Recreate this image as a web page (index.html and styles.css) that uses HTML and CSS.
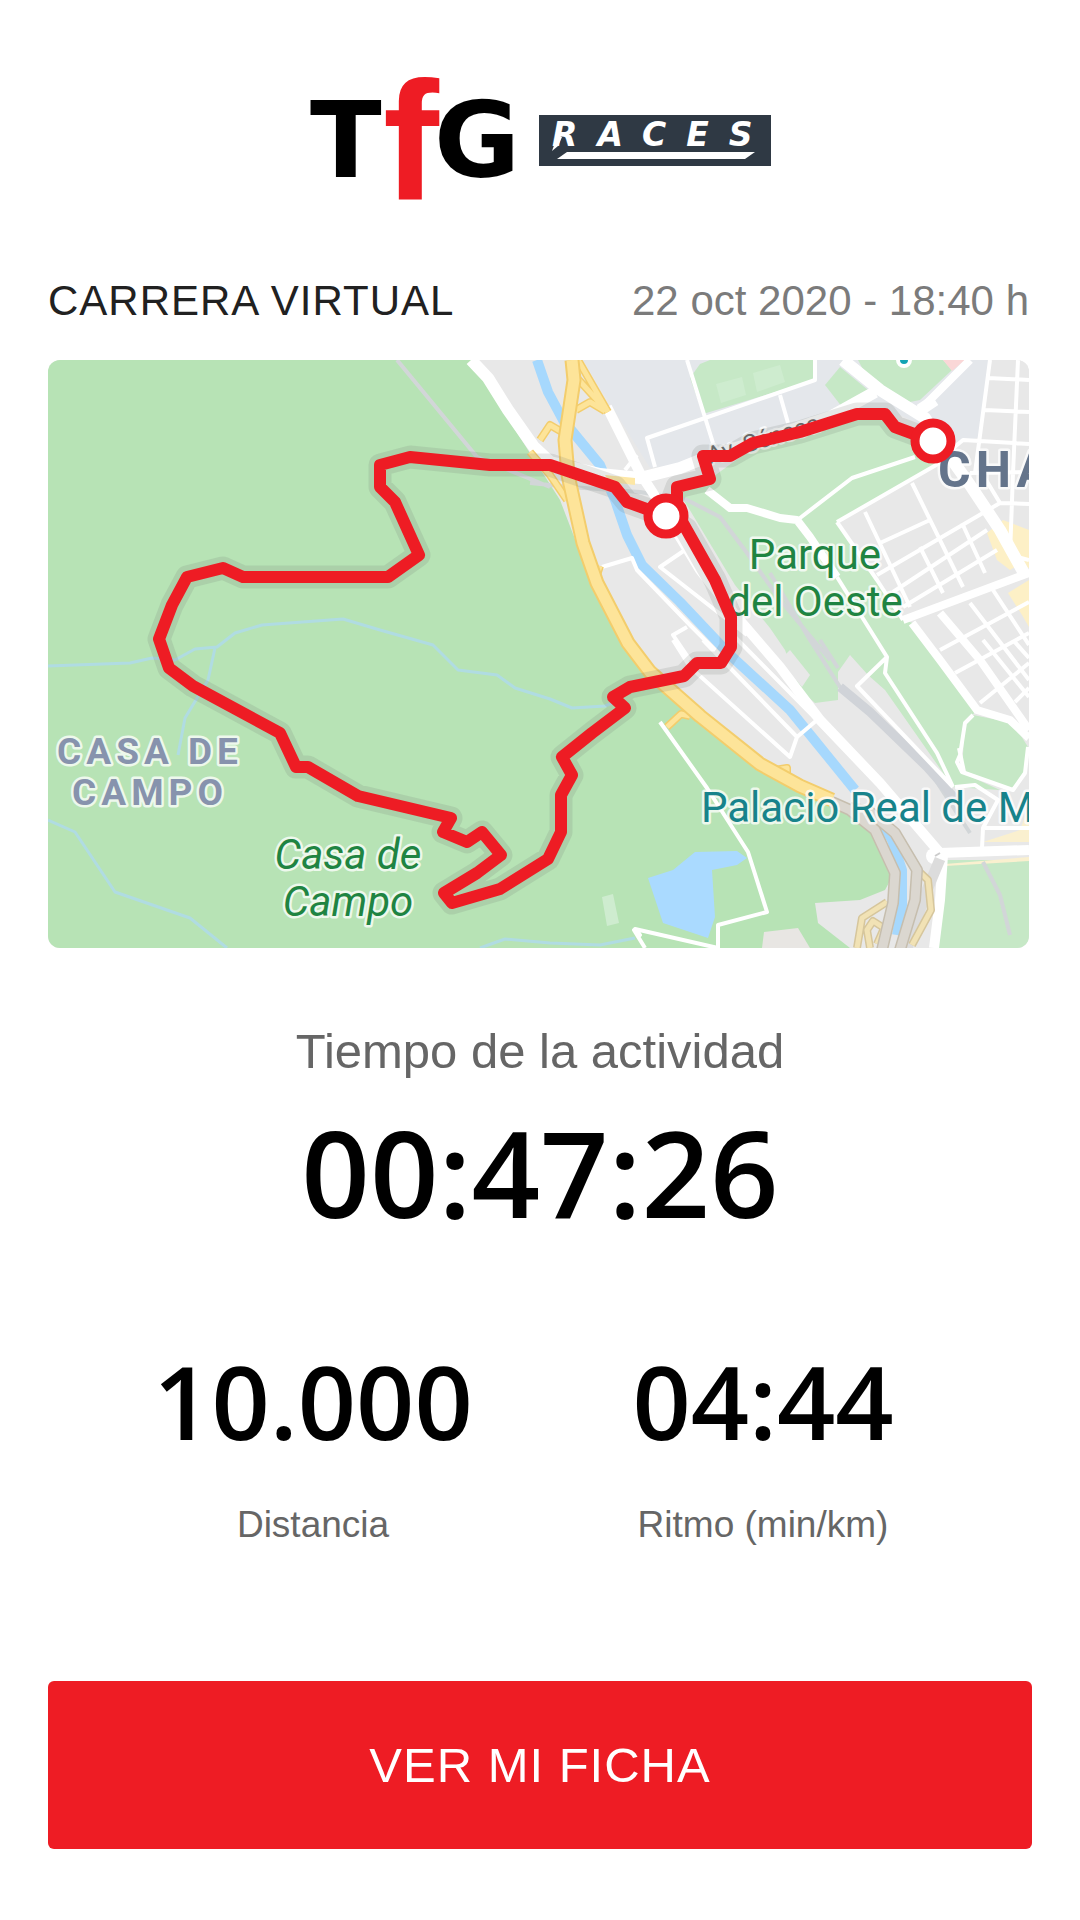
FILE: index.html
```html
<!DOCTYPE html>
<html lang="es">
<head>
    <meta charset="UTF-8">
    <meta name="viewport" content="width=device-width, initial-scale=1.0">
    <title>TfG Races - Carrera virtual</title>
    <link rel="stylesheet" href="styles.css">
</head>
<body>
    <main class="page">
        <header class="header">
            <svg class="logo" viewBox="306 76 466 126" role="img" aria-label="TfG Races">
                <text class="logo-main" x="309" y="177">T</text>
                <text class="logo-main" x="433" y="177">G</text>
                <text class="logo-f" x="382" y="200">f</text>
                <rect x="538" y="115" width="232" height="51" fill="#2f3944"/>
                <text class="logo-races" x="551" y="146">RACES</text>
                <path d="M551 151l5-14h5l-4 9z" fill="#fff"/>
                <path d="M556 159l10-7h188l-10 7z" fill="#fff"/>
            </svg>
        </header>

        <div class="race-info">
            <h1 class="race-name">CARRERA VIRTUAL</h1>
            <time class="race-date" datetime="2020-10-22T18:40">22 oct 2020 - 18:40 h</time>
        </div>

        <svg class="map" viewBox="48 360 981 588" role="img" aria-label="Mapa del recorrido">
            <!-- Suelo y parques -->
            <rect x="48" y="360" width="981" height="588" fill="#e8e8e8"/>
            <path class="urban" d="M583 360H1029L990 360 980 437 960 443 900 415 780 440 700 462 650 468z"/>
            <path class="block" d="M990 360H1029V460H975z"/>
            <path class="park" d="M48 360H472L505 410 512 425 560 500 583 560 645 665 700 712 760 768 850 808 880 835 893 875 885 890 860 900 815 903 818 923 850 948H48z"/>
            <path class="ground" d="M762 948L764 932 798 928 810 948z"/>
            <path class="park-light" d="M690 378L700 364 710 360H815V380L703 414z"/>
            <path class="park-light" d="M825 385L840 367 868 390 842 407z"/>
            <path class="park-light" d="M858 360H943L952 370 920 400 910 402 867 377z"/>
            <path fill="#fad7d7" d="M943 360H965L952 371z"/>
            <path class="park-light" d="M677 490L710 479 750 450 857 416 885 414 930 440 957 453 837 522 877 580 903 620 913 623 977 710 965 723 958 760 967 775 1000 790 953 787 885 690 868 675 850 655 838 672 838 700 815 703 800 690 785 650 770 628 735 585 688 507z"/>
            <path class="park-light" d="M973 715L1013 723 1028 747 1025 773 1013 790 962 770 965 723z"/>
            <path class="park-light" d="M947 860H1029V948H938z"/>
            <path class="block" d="M785 655l5-5 20 25-8 12-17-20z"/>
            <path fill="#ceeccf" d="M716 384l26-7 4 18-25 8zM753 373l27-8 5 17-28 10zM602 897l11-3 6 29-12 3z"/>
            <path fill="#fdf0c6" d="M987 533L1003 520 1029 530V568L1018 565 1010 570 997 560zM1008 593L1029 580V627L1022 615z"/>
            <path fill="#faf0cf" d="M983 842H1029V806L1020 830zM945 864l84-7v4l-84 5z"/>

            <!-- Agua -->
            <path class="lake" d="M648 878L673 870 695 852 737 851 747 858 737 865 712 870 715 917 708 938 663 923z"/>
            <path class="stream" d="M48 666L130 663 152 658 175 660 195 649 217 647 235 633 262 625 343 619 380 630 433 645 458 670 497 675 515 688 550 699 572 708 605 706 620 700M215 648L208 680 185 718 178 755M48 820L75 832 115 892 190 918 227 948M480 948L505 939 550 943 600 945 635 938"/>
            <path class="river" d="M537 360L548 392 563 420 600 465 615 500 627 535 642 565 680 602 730 655 790 710 855 790"/>
            <path class="river" d="M880 820L892 840 902 870V905L897 935"/>

            <!-- Vías del tren -->
            <path class="rail" d="M397 360L477 457 550 487M530 483L570 487 640 492 687 500 720 517 747 553 780 600 830 660M770 573L810 640 840 687 870 712 927 767 970 833M820 640L838 668"/>
            <path class="rail-wide" d="M840 687L870 712 927 767 958 802"/>

            <!-- Calles -->
            <path class="street" d="M687 360L713 443M655 467L647 438 815 380V360M780 395L788 423M602 567L632 558 637 570 690 625 720 655M747 635L660 567 685 550M673 640L690 667 790 757 797 737 703 640M690 660L673 635 687 627M733 635L817 720 797 737M625 470L637 455"/>
            <path class="street" d="M660 722L707 788 748 852 767 912 718 925V948M718 948L635 929 640 935 634 930 645 948"/>
            <path class="street" d="M800 518L852 478 915 457M837 522L957 453M837 522L877 580 903 620M837 577L887 657 885 673 937 753 953 787M887 657L857 686 953 787"/>
            <path class="street" d="M865 512L910 607M912 483L963 587M962 523L985 573M920 547L943 593M880 543L930 520M877 575L1000 503 1029 504M893 592L987 530M903 607L997 550M980 470L1000 503M990 360L975 473M1018 360L1013 473 1010 555 1029 560M988 378L1029 380M985 410L1029 412M945 455L963 440 1029 444M970 473L1029 472"/>
            <path class="street" d="M970 603L1029 680M993 590L1029 645M940 650L1029 602M955 673L1029 633M980 703L1029 663M983 640L1029 697M1013 640L1029 658M1015 702L1029 688"/>
            <path class="street" d="M973 715L965 723 960 755 957 762 962 772 1013 790 1025 773 1028 747M959 748L964 772M955 787L975 785 998 800 983 828 982 848M985 828H1029"/>
            <path class="road" d="M707 490L730 508 747 508 780 518 797 520 810 537 837 577M927 403L970 360"/>
            <path class="road" d="M903 620L1029 573M912 623L940 660 977 710 1010 720 1029 738M940 613L980 660 1029 730"/>
            <path class="avenue" d="M471 360L488 378 508 410 534 447 550 462 600 474 640 478 680 468 705 458 780 434 830 417 875 392"/>
            <path class="avenue" d="M843 360L880 390 925 418 945 450 970 485 1000 530 1025 575M920 410L935 400"/>
            <path class="road-main" d="M607 407L640 473 653 493 700 570 737 617 780 667 820 720 880 783 940 853 1029 850"/>
            <path class="road-main" d="M943 855L940 900 934 948"/>
            <circle cx="934" cy="856" r="8" fill="#fff"/>
            <path class="rail" d="M983 862L1000 895 1010 935"/>
            <path d="M935 856l5-3" stroke="#ccc" stroke-width="2"/>
            <path class="gray-road" d="M940 859L925 895 907 948"/>

            <!-- Autovía M-30 con sus accesos -->
            <path class="ramp-casing" d="M578 360L608 412M577 378L607 411M576 410L590 402 605 411M540 440L550 425 562 432M530 452L550 475 567 500M667 727L681 714 690 716M597 575L600 566M775 770L787 768V777"/>
            <path class="ramp" d="M578 360L608 412M577 378L607 411M576 410L590 402 605 411M540 440L550 425 562 432M530 452L550 475 567 500M667 727L681 714 690 716M597 575L600 566M775 770L787 768V777"/>
            <path class="motorway-casing" d="M572 360L574 380 565 440 568 475 583 543 597 583 628 643 650 672 700 716 760 764 800 786 832 800"/>
            <path class="motorway" d="M572 360L574 380 565 440 568 475 583 543 597 583 628 643 650 672 700 716 760 764 800 786 832 800"/>
            <path fill="#fde7a5" d="M605 475l30 3v7l-25-3z"/>
            <path class="tan-casing" d="M857 948L862 918 887 902M870 948L867 930 873 921 884 928 877 944M912 865L928 880 931 910 912 945"/>
            <path class="tan" d="M857 948L862 918 887 902M870 948L867 930 873 921 884 928 877 944M912 865L928 880 931 910 912 945"/>
            <path class="tunnel-casing" d="M832 802L850 810 875 830 895 873 893 903 882 950M850 808L870 812 895 833 917 870 915 900 900 950"/>
            <path class="tunnel" d="M832 802L850 810 875 830 895 873 893 903 882 950M850 808L870 812 895 833 917 870 915 900 900 950"/>
            <circle cx="904" cy="360" r="6" fill="#12a3b4" stroke="#fff" stroke-width="4"/>

            <!-- Nombres -->
            <text class="label street-name" x="710" y="464" transform="rotate(-17 710 464)">Av. Séneca</text>
            <g class="label place">
                <text x="815" y="569">Parque</text>
                <text x="815" y="616">del Oeste</text>
            </g>
            <g class="label place italic">
                <text x="348" y="869">Casa de</text>
                <text x="348" y="916">Campo</text>
            </g>
            <g class="label zone">
                <text x="150" y="764">CASA DE</text>
                <text x="150" y="805">CAMPO</text>
            </g>
            <text class="label landmark" x="701" y="822">Palacio Real de Madrid</text>
            <text class="label district" x="938" y="487">CHAMBERÍ</text>

            <!-- Recorrido -->
            <path class="route-shadow" d="M666 516L627 502 615 487 550 465H490L410 457 380 465V487L395 502 419 555 388 577H243L223 568 187 577 172 605 159 639 169 668 193 686 280 733 296 767H308L358 796 451 818 443 832 467 842 482 832 501 855 477 873 444 893 452 903 500 889 548 859 561 832V795L572 775 562 757 592 733 625 708 613 697 630 687 684 676 697 663H721L731 647V617L715 580 686 529 666 516 677 487 710 479 703 456H730L753 443 800 432 857 414H885L895 427 933 441"/>
            <path class="route" d="M666 516L627 502 615 487 550 465H490L410 457 380 465V487L395 502 419 555 388 577H243L223 568 187 577 172 605 159 639 169 668 193 686 280 733 296 767H308L358 796 451 818 443 832 467 842 482 832 501 855 477 873 444 893 452 903 500 889 548 859 561 832V795L572 775 562 757 592 733 625 708 613 697 630 687 684 676 697 663H721L731 647V617L715 580 680 518 666 516 677 502V487L710 479 703 456H730L753 443 800 432 857 414H885L895 427 933 441"/>
            <circle class="marker" cx="666" cy="516" r="18"/>
            <circle class="marker" cx="933" cy="441" r="18"/>
        </svg>

        <section class="activity">
            <h2 class="activity-title">Tiempo de la actividad</h2>
            <p class="activity-time">00:47:26</p>
        </section>

        <section class="stats">
            <div class="stat">
                <p class="stat-value">10.000</p>
                <p class="stat-label">Distancia</p>
            </div>
            <div class="stat">
                <p class="stat-value">04:44</p>
                <p class="stat-label">Ritmo (min/km)</p>
            </div>
        </section>

        <button class="button" type="button">VER MI FICHA</button>
    </main>
</body>
</html>
```

FILE: styles.css
```css
* {
    box-sizing: border-box;
}
body {
    margin: 0;
    background-color: #fff;
    font-family: "Liberation Sans", Arial, sans-serif;
}
h1, h2, p {
    margin: 0;
    font-weight: normal;
}
.page {
    padding: 76px 48px 72px;
}
/* Logo */
.header {
    display: flex;
    justify-content: center;
}
.logo {
    display: block;
    width: 466px;
    height: 126px;
    overflow: visible;
}
.logo-main {
    font: bold 105px "DejaVu Sans", sans-serif;
}
.logo-f {
    font: bold 168px "Liberation Sans", sans-serif;
    fill: #ee1c24;
}
.logo-races {
    font: italic bold 33px "DejaVu Sans", sans-serif;
    letter-spacing: 20px;
    fill: #fff;
}
/* Nombre y fecha */
.race-info {
    display: flex;
    justify-content: space-between;
    margin: 75px 3px 35px 0;
    font-size: 42px;
    line-height: 48px;
}
.race-name {
    font-size: 42px;
    letter-spacing: 1px;
    color: #212121;
}
.race-date {
    color: #7b7b7b;
}
/* Mapa */
.map {
    display: block;
    width: calc(100% - 3px);
    border-radius: 12px;
}
.map path {
    fill-rule: evenodd;
    stroke-linejoin: round;
}
.urban {
    fill: #e4e7eb;
}
.block {
    fill: #e8e8e8;
}
.ground {
    fill: #e8e6e3;
}
.park {
    fill: #b7e3b5;
}
.park-light {
    fill: #c6e8c6;
}
.lake {
    fill: #aadaff;
}
.stream, .river, .rail, .rail-wide, .street, .road, .avenue, .road-main,
.gray-road, .ramp, .ramp-casing, .motorway, .motorway-casing, .tan,
.tan-casing, .tunnel, .tunnel-casing, .route, .route-shadow {
    fill: none;
}
.stream {
    stroke: #b0dce2;
    stroke-width: 3px;
}
.river {
    stroke: #a6d8fd;
    stroke-width: 10px;
}
.rail {
    stroke: #d2d6d8;
    stroke-width: 4px;
}
.rail-wide {
    stroke: #d0d3d8;
    stroke-width: 9px;
}
.street {
    stroke: #fff;
    stroke-width: 4px;
}
.road {
    stroke: #fff;
    stroke-width: 8px;
}
.avenue {
    stroke: #fff;
    stroke-width: 12px;
}
.road-main {
    stroke: #fff;
    stroke-width: 10px;
}
.gray-road {
    stroke: #dcdcdc;
    stroke-width: 11px;
}
.ramp-casing {
    stroke: #f3cd6c;
    stroke-width: 8px;
}
.ramp {
    stroke: #fde499;
    stroke-width: 5px;
}
.motorway-casing {
    stroke: #f3cd6c;
    stroke-width: 15px;
}
.motorway {
    stroke: #fde499;
    stroke-width: 11px;
}
.tan-casing {
    stroke: #d6c69c;
    stroke-width: 8px;
}
.tan {
    stroke: #f1e2b5;
    stroke-width: 5px;
}
.tunnel-casing {
    stroke: #c6beae;
    stroke-width: 12px;
}
.tunnel {
    stroke: #dbd7d0;
    stroke-width: 9px;
}
.label {
    font-family: Roboto, sans-serif;
    stroke: rgba(255, 255, 255, 0.75);
    stroke-width: 5px;
    stroke-linejoin: round;
    paint-order: stroke;
}
.place {
    font-size: 42px;
    text-anchor: middle;
    fill: #1f8442;
}
.italic {
    font-style: italic;
}
.zone {
    font-size: 37px;
    font-weight: bold;
    letter-spacing: 5px;
    text-anchor: middle;
    fill: #8793ad;
}
.landmark {
    font-size: 42px;
    fill: #17838b;
}
.district {
    font-size: 50px;
    font-weight: bold;
    letter-spacing: 5px;
    fill: #64748b;
}
.street-name {
    font-size: 24px;
    fill: #666;
}
.route-shadow {
    stroke: rgba(110, 120, 110, 0.17);
    stroke-width: 23px;
}
.route {
    stroke: #ee1c24;
    stroke-width: 12px;
}
.marker {
    fill: #fff;
    stroke: #ee1c24;
    stroke-width: 9px;
}
/* Tiempo */
.activity {
    margin-top: 75px;
    text-align: center;
}
.activity-title {
    margin-bottom: 23px;
    font-size: 49px;
    line-height: 56px;
    color: #666;
}
.activity-time {
    font: 600 120px/140px "Open Sans", sans-serif;
}
/* Distancia y ritmo */
.stats {
    display: grid;
    grid-template-columns: 1fr 1fr;
    margin-top: 99px;
    padding: 0 44px 0 40px;
    text-align: center;
}
.stat-value {
    margin-bottom: 44px;
    font: 600 102px/120px "Open Sans", sans-serif;
}
.stat-label {
    font-size: 37px;
    line-height: 40px;
    color: #666;
}
.button {
    display: block;
    width: 100%;
    height: 168px;
    margin-top: 136px;
    border: none;
    border-radius: 6px;
    background-color: #ee1c24;
    color: #fff;
    font: 49px "Liberation Sans", Arial, sans-serif;
    letter-spacing: 1px;
    cursor: pointer;
}
```
